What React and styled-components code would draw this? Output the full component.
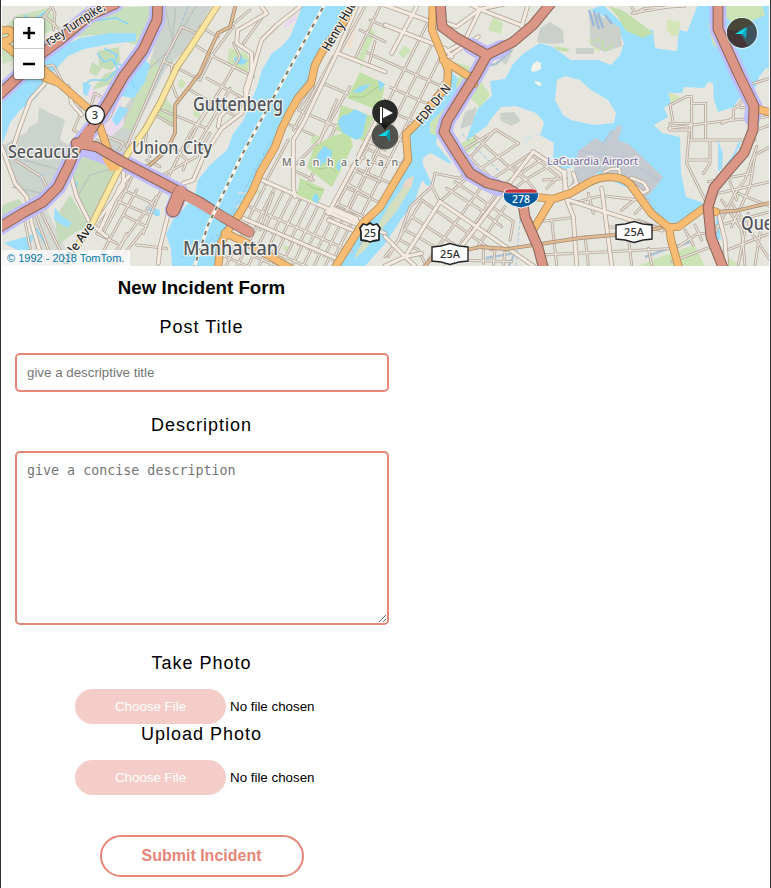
import React from "react";
import styled, { createGlobalStyle } from "styled-components";

const GlobalStyle = createGlobalStyle`
  * { box-sizing: border-box; }
  body { margin: 0; background: #fff; font-family: "Liberation Sans", Arial, sans-serif; color: #000; }
`;

const Page = styled.main`
  width: 771px;
  height: 888px;
  overflow: hidden;
  border: solid #333;
  border-width: 0 1px;
  padding: 6px 1px 0;
`;

const MapFrame = styled.section`
  position: relative;
  width: 767px;
  height: 260px;
  overflow: hidden;
  background: #e6e6df;
`;

const MapDrawing = styled.svg`
  display: block;
  width: 767px;
  height: 260px;
`;

const ROAD = {
  street: ["#b3a79b", 2.9, "#ebe5dd", 1.3],
  avenue: ["#b3a699", 4.7, "#f3ebe2", 3.1],
  tan: ["#a58b74", 3.8, "#dfba92", 2.3],
  yellow: ["#b7a16c", 6.8, "#fae69f", 5.2],
  orange: ["#b38a59", 8.2, "#f7bc72", 6.6],
  motorway: ["#8c695d", 10.8, "#dc9685", 8.6],
};

const RoadLine = styled.path`
  fill: none;
  vector-effect: non-scaling-stroke;
  stroke-linejoin: round;
  stroke-linecap: round;
  stroke: ${(p) => p.$color};
  stroke-width: ${(p) => p.$width};
`;

const Halo = styled(RoadLine).attrs({ $color: "#c1bcfb", $width: 16.5 })``;
const Water = styled.path`fill: #9cdffd;`;
const Land = styled.path`fill: #e6e6df;`;
const Park = styled.path`fill: ${(p) => p.$tone || "#cce4b5"};`;
const Pale = styled.path`fill: ${(p) => p.$tone || "#ccd2cc"};`;

const MapLabel = styled.text`
  font-family: "Noto Sans", "Open Sans", sans-serif;
  font-size: ${(p) => p.$size}px;
  font-weight: ${(p) => p.$weight || 500};
  fill: ${(p) => p.$color || "#50555a"};
  stroke: #f5f4f0;
  stroke-width: ${(p) => (p.$plain ? 0 : 2.6)}px;
  stroke-linejoin: round;
  paint-order: stroke;
`;

function Roads({ kind, paths }) {
  const [edge, outer, fill, inner] = ROAD[kind];
  return (
    <g>
      {paths.map((d, i) => <RoadLine key={"e" + i} d={d} $color={edge} $width={outer} />)}
      {paths.map((d, i) => <RoadLine key={"f" + i} d={d} $color={fill} $width={inner} />)}
    </g>
  );
}

/* Parallel streets: start point, direction vector, step vector, count */
const rows = (x, y, dx, dy, sx, sy, n) =>
  Array.from({ length: n }, (_, i) => `M${x + sx * i} ${y + sy * i}l${dx} ${dy}`);

const GRIDS = [
  {
    id: "east-side",
    area: "M372 6L431 6 430 30 443 58 442 88 404 130 404 162 380 200 366 216 330 212 352 160 370 130 392 82 364 68Z",
    lines: [...rows(316, 246, 120, -240, 12, 6, 8), ...rows(330, 36, 120, 54, -9, 20, 10)],
  },
  {
    id: "midtown",
    area: "M262 180L378 230 338 264 240 220Z",
    lines: [...rows(212, 250, 66, -132, 8.5, 4, 17), ...rows(250, 207, 130, 57, 0, 0, 1)],
  },
  {
    id: "downtown",
    area: "M224 238L250 222 342 262 338 268 222 268Z",
    lines: [...rows(221, 276, 30, -60, 9, 4, 13), ...rows(232, 234, 110, 48, -4, 11, 3)],
  },
];

/* Streets of the two halves, in units of a third of a pixel */
const WEST_STREETS = [
  "M380 440L490 185 545 80 600 105", "M490 185L515 195 600 240", "M575 130L650 175 760 230", "M600 80L655 110",
  "M515 190V250L530 290", "M620 235L740 300", "M570 270L700 345", "M485 330L620 385", "M465 345L525 378",
  "M440 400L435 430 450 470", "M560 440L600 365 660 270 720 170 700 130", "M530 480L570 400 620 330",
  "M600 240L640 160 700 80", "M590 440L690 265", "M370 570L460 610", "M355 605L450 645", "M370 645L440 680",
  "M430 700L470 600 530 480", "M310 700L380 565 410 500", "M290 790L410 570", "M320 790L470 590",
  "M350 790L430 690", "M410 735L500 745", "M480 500L440 480", "M380 700L340 790", "M290 700L350 730",
  "M460 540L590 470 630 400", "M520 440L560 480 550 510", "M785 55L730 130", "M750 30L690 80",
  "M1095 20L1020 155", "M1140 20L1065 175", "M1080 90L1155 125", "M1110 60L1155 80", "M1125 125L1105 200",
  "M970 250L1110 310", "M940 260L895 330 1010 380", "M1000 170L950 260 880 390", "M870 375L940 405",
  "M800 540L865 420", "M880 500L960 420 1010 300", "M900 600L1010 375", "M880 510L940 540", "M930 490L970 400 1050 260",
  "M1155 300L1110 430 990 650", "M1155 400L1030 650", "M1095 420L1155 450", "M1080 470L1155 500",
  "M1060 510L1140 545", "M1040 550L1110 590", "M1010 610L1090 650", "M820 580L780 690",
  "M120 65L155 20 165 40 160 90", "M120 65L135 50 180 90", "M70 110L120 65",
  "M130 200L160 195 190 250 240 300 240 345 220 390 285 430",
  "M275 310L285 280 345 315 330 350 300 380", "M300 400L370 430 350 460 290 420",
  "M150 580L125 530 45 480", "M105 640L160 790", "M70 640L100 790", "M125 640L200 790",
];

const WEST_AVENUES = [
  "M900 20L830 75 785 120 770 170 740 280 725 340 665 385 610 470 580 540 550 550 540 570",
  "M713 90L710 130 755 160 755 210 735 270 740 295 710 300 660 350 655 380",
  "M785 20L800 40 715 90", "M1070 20L1015 150 910 370 880 420 880 560 885 590",
  "M1015 160L1155 215", "M785 540L1155 700", "M730 655L1020 780",
  "M1155 310L1070 480 985 640", "M980 635L1085 680", "M1000 625L1070 655", "M985 660L1080 700",
  "M5 440L45 550 80 590 95 670 130 790", "M200 500L180 560 120 630", "M208 510L230 590 270 670 320 710",
  "M135 250L90 300 60 380 40 440", "M205 260L215 310 245 345",
  "M370 500V560L280 680", "M410 500L360 560 300 690", "M545 570L505 640 480 740 475 790",
];

const EAST_STREETS = [
  "M200 470L335 390 400 430", "M200 470L240 500", "M270 410L360 490 420 540", "M230 450L320 535",
  "M250 530L400 430", "M310 545L430 465", "M345 560L475 475", "M390 565L420 540 505 490", "M330 390L240 490",
  "M390 500L450 570", "M435 460L520 530 485 565", "M150 520L140 560 75 620 40 720 0 770", "M150 520L225 535 245 515",
  "M250 530L165 605", "M140 560L165 605", "M185 565L280 625 350 680", "M210 545L385 665 375 720",
  "M110 600L250 700 320 750", "M80 650L210 735", "M60 690L150 740", "M290 560L130 780", "M330 585L220 740",
  "M360 620L275 745", "M105 610L10 770", "M45 720L100 750 120 790", "M200 750L190 795", "M295 750V790", "M330 750L325 795", "M360 755L355 795",
  "M200 780L380 785", "M465 665L565 652", "M500 660L515 795", "M600 710L610 795", "M560 610L650 587 760 600",
  "M710 630L760 590", "M470 765L870 745", "M750 640L790 600", "M760 660L840 690", "M670 680L760 690",
  "M730 710L740 795", "M790 745L800 795", "M860 785L980 740", "M880 740L940 700 990 700", "M900 690L925 735", "M930 675L950 720",
  "M475 540L545 535", "M610 580L625 640", "M855 315L905 290 920 290 920 415", "M850 385L1000 365 1150 350",
  "M855 370V390H915", "M855 315L865 370H915", "M920 310H962V415", "M915 420H1110", "M915 370L905 490 960 600",
  "M975 420V490L955 520", "M910 480H975", "M1075 300L1045 330V355L1010 370", "M1055 320L1090 325",
  "M1070 300L1085 280", "M1000 580L1155 545", "M970 545L1100 520", "M1115 440L1080 540 1050 580 990 700",
  "M1155 440L1110 465 1095 560 1040 680", "M1010 600L1070 690 1080 795", "M1040 610L1155 780", "M1060 580L1155 620",
  "M990 680L1155 635", "M1000 760L1155 700", "M1090 640L1060 795", "M1130 670L1110 795", "M1035 545L1055 600",
  "M1105 250L1155 235", "M1115 390L1155 375", "M740 20L750 40 780 25 900 18", "M740 40L900 12",
];

const EAST_AVENUES = [
  "M0 75L180 145 200 170", "M0 15L165 75", "M95 20L20 160", "M185 70L215 80 285 28 420 80", "M285 28L240 120",
  "M250 10L285 28 390 5", "M430 10L410 80", "M185 155L230 130 300 160", "M190 170L280 110", "M150 80L190 90",
  "M445 455L275 680 185 798", "M445 455L535 515 545 575", "M165 605L275 680 445 798", "M165 605L60 770",
  "M0 710L60 770 90 798", "M0 798L60 770 110 760", "M545 600L565 650 575 795", "M650 565L660 640 680 795",
  "M550 600L830 690", "M540 515V570", "M565 520L575 550 555 565", "M1000 640L1020 720 1025 795",
];

const MOTORWAYS = [
  "M158 0L157 20 143 50 123 77 110 100 93 127 77 147 68 167 58 187 43 202 23 213 0 227",
  "M115 4L90 15 60 40 40 55 17 78 0 94",
  "M76 143L97 147 123 162 180 192 200 202 223 217 249 232",
  "M440 0L442 27 457 38 487 55 477 73 460 100 447 121 444 132 457 153 470 173 487 183 507 188 522 197 525 217 538 247 544 270",
  "M487 55L513 42 533 25 552 2",
  "M718 0L718 29 738 73 754 106 753 130 744 153 729 170 714 188 708 207 711 237 724 270",
];

const ORANGE = [
  "M0 32C14 24 17 40 5 41",
  "M2 43L20 57 43 69 67 90 90 110 100 127 108 150 114 165",
  "M45 78L56 82",
  "M356 -2L345 20 322 52 315 65 311 83 298 98 290 112 282 128 275 147 260 173 253 190 240 213 230 227 221 243 218 268",
  "M225 233L245 242 273 258 290 268",
  "M433 0L432 30 443 57 448 70 447 87 437 97 417 123 406 134 408 160 400 173 380 207 363 223 336 266",
  "M443 60L470 77 474 84",
  "M533 230L550 202M536 197L553 199 571 193 588 183C604 174 622 176 630 184L651 213 668 227 678 227 704 208 716 212",
  "M669 227L671 240 679 268",
  "M758 109L772 113",
];

const Shield = ({ d, x, y, children }) => (
  <g>
    <path d={d} fill="#fff" stroke="#252525" strokeWidth="1.4" />
    <MapLabel x={x} y={y} $size={11} $weight={500} $color="#303030" $plain textAnchor="middle">{children}</MapLabel>
  </g>
);

function CityMap() {
  return (
    <MapDrawing viewBox="2 6 767 260" role="img" aria-label="Map of Manhattan">
      <defs>
        {GRIDS.map((g) => <clipPath id={g.id} key={g.id}><path d={g.area} /></clipPath>)}
      </defs>

      {/* industrial ground and meadows west of the river */}
      <Pale d="M150 6H212L185 50 165 70 130 140 118 170 92 222 75 194 72 165 100 142 119 116 145 78 155 45Z" />
      <Pale d="M2 146L13 180 28 202 47 198 67 163 70 146 55 137 34 128Z" />
      <Pale d="M39 107L48 112 65 120 60 140 37 132 27 136 28 128 38 122Z" />
      <Pale d="M30 215L45 206 75 268H36Z" $tone="#d6d9d2" />
      <Park d="M64 28L105 8 154 6 151 32 136 45 108 36 90 35 63 40Z" $tone="#c8dfbd" />
      <Park d="M2 30L18 15 48 8 58 26 36 39 19 59 2 64Z" $tone="#cbe0bf" />
      <Park d="M98 51L119 47 120 62 111 70 99 67ZM92 62L102 68 96 76 89 72ZM105 74L117 70 122 76 108 85 92 90 100 80Z" $tone="#c4ddb6" />
      <Park d="M83 149L100 153 116 171 98 202 88 222 72 181Z" $tone="#c6dbbc" />
      <Park d="M2 205L19 199 31 215 2 228ZM55 218L70 195 86 221 90 226 74 233 58 245Z" $tone="#c6dbbc" />
      <Park d="M122 128L132 107 145 71 155 57 160 72 145 104 132 130ZM165 97L175 110 172 128 155 115Z" $tone="#c9deb9" />
      <Pale d="M122 100L124 125 110 138 102 126 113 105Z" $tone="#eadced" />
      <Pale d="M92 85L95 95 102 92 98 103 87 96Z" $tone="#eadced" />
      <path d="M165 6L174 46 142 75M176 6L172 42M196 6L170 50M77 197L90 175 115 168M6 155L61 170 65 190M12 187L50 195" stroke="#bbc5c0" strokeWidth="1.4" fill="none" />

      {/* rivers and bays */}
      <Water d="M136 33L110 33 80 38 60 47 42 63 20 83 2 96V145L10 123 19 111 37 97 44 80 57 68 68 56 84 49 110 44 136 41Z" />
      <Water d="M139 52L150 65 145 82 134 98 120 96 128 72ZM83 82L91 85 87 96 83 94ZM119 106L129 109 117 126 112 120Z" />
      <Water d="M302 6L297 20 290 37 281 47 272 53 262 70 257 87 250 104 243 121 233 134 227 150 210 165 198 180 195 195 180 213 173 220 166 234 171 249 172 266H218L222 243 240 214 254 190 262 172 285 130 299 98 312 83 317 65 331 43 353 6Z" />
      <Water d="M433 27L447 55 454 75 462 82 450 110 438 126 436 144 451 162 440 171 442 174 435 176 434 183 427 186 422 180 415 200 400 221 384 245 365 266H338L380 207 403 172 407 134 446 86 442 62Z" />
      <Water d="M423 163Q422 156 431 153L437 155 451 163 440 171 442 174 435 176 434 184 425 181Z" />
      <Land d="M423 165Q421 156 431 153L438 157 450 164 441 171 444 175 435 176 432 184Z" />
      <Water d="M524 53L540 43 553 47 571 60 598 60 611 65 620 55 624 43 617 28 608 18 590 10 600 6H769V78L757 86 744 95 738 100 734 107 718 112 714 100 713 83 708 82 704 88 684 87 682 93 669 93 671 103 664 108 668 117 654 125 662 133 680 137 681 173 686 197 704 203 690 214 676 225 654 213 643 195 578 165 566 169 560 168 553 158 554 143 540 135 527 137 525 146 526 138 541 134 544 122 536 113 516 106 501 107 490 120 487 126 466 141 474 117 479 107 492 96 490 81 505 79 513 64Z" />
      <Water d="M717 208L721 240 715 239ZM718 141L723 153 722 169 718 171Z" />
      <path d="M740 142L734 155 726 166 728 171M737 145L742 151" stroke="#9cdffd" strokeWidth="1.8" fill="none" />
      <Water d="M151 207L160 210 160 216 150 212ZM55 207L60 215 72 223 68 228 54 220ZM4 243L35 234 28 251 17 250ZM38 173L44 175 41 181Z" />

      {/* islands */}
      <Land d="M557 80L565 76 580 80 591 90 608 100 616 113 614 123 594 125 571 120 563 115 555 100Z" />
      <Land d="M600 2L625 26 641 30 653 30 655 48 667 50 677 51 679 30 687 32 699 2Z" />
      <path d="M533 64l4-3 4 2 0 6-4 2-5 1-1-3zM535 81l5 1 2 3-3 1-4-3z" fill="#eff3e8" />
      <path d="M770 69L766 68 759 77 756 86 770 86Z" fill="#e6e6df" />
      <path d="M414 176L408 178 403 187 390 204 378 225 358 249 354 259 364 251 381 230 396 212 412 186Z" fill="#d4dec0" />
      <path d="M414 176L405 181 402 188 411 187Z" fill="#ead5c7" />

      {/* parks and large lots */}
      <path d="M351 28l6-3-6 23-7-2z" fill="#f0e1d2" />
      <Park d="M371 28L375 33 361 68 357 60ZM314 134L323 138 317 146 310 142ZM229 48L246 53 250 60 247 75 227 65Z" />
      <path d="M234 58l8-3 1 4 5 1-5 5-8-2z" fill="#91dafb" />
      <Park d="M405 45L411 51 403 58 398 53ZM493 17L503 23 501 34 488 30ZM180 79L186 82 183 88 178 86ZM193 110L200 113 199 118 194 116Z" />
      <Park d="M453 62L469 66 475 82 460 100 456 85 460 75ZM481 81L490 95 480 107 469 97ZM448 105L430 123 430 133 438 136 450 133 444 122ZM458 145L474 136 480 142 467 153Z" />
      <Park d="M554 46L570 49 567 52 557 50ZM608 6L622 10 643 25 653 33 643 38 626 31 618 17Z" $tone="#c2deab" />
      <Park d="M667 20L680 22 679 35 672 36 667 30ZM668 92L681 97 671 103ZM594 28L609 30 612 44 598 52 588 42Z" $tone="#d4e5b6" />
      <Park d="M708 22L714 30 719 48 713 45ZM727 6L762 6 765 15 738 27 723 15ZM639 266L657 258 694 245 705 266ZM720 250L740 266H718ZM737 190L742 193 738 200Z" />
      <Park d="M283 245L292 248 289 251 284 250ZM258 189L262 192 260 196 257 193Z" />
      <Pale d="M285 24L295 14 297 20 285 28Z" $tone="#ead9ed" />
      <Pale d="M540 28L550 22 563 30 564 43 550 44 537 42ZM589 12L605 18 620 28 622 46 605 52 591 45Z" $tone="#cbd0cb" />
      <Pale d="M576 48H594V54L576 54ZM500 113L514 112 521 121 511 126 501 121ZM465 112L477 107 472 125 460 129ZM503 52L514 48 506 65 500 60Z" $tone="#cbd0cb" />
      <path d="M589 10l5 16M594 11l5 18M598 13l5 15M605 15l7 9" stroke="#9bb9d7" strokeWidth="2.4" />
      <path d="M593 42Q600 38 603 41V48Q607 53 613 43" fill="none" stroke="#c3deae" strokeWidth="2" />
      <Pale d="M571 186L578 151 596 138 605 144 618 125 622 127 618 140 630 145 663 177 654 189 646 198 628 187 620 176 600 171 584 181Z" $tone="#c5cad1" />
      <path d="M601 146l12-16M580 151l45 7 35 23M609 158l-17 18" stroke="#bcc5d1" strokeWidth="2.2" fill="none" />
      <path d="M241 200h12M238 193h13M234 207h13M237 205h13" stroke="#dce4e5" strokeWidth="1.5" />
      <path d="M61 30L73 24 82 30 93 21 116 18 128 24M104 48L117 55 114 63 122 65M97 53L104 62 112 59 118 69 107 80 91 80 84 85M12 222L30 207M36 228L52 255 53 266M77 181L75 195M146 207L158 216M137 54L145 60 131 78 134 88M45 12L31 23 25 15" fill="none" stroke="#8bd5f7" strokeWidth="1.7" />
      <path d="M188 6L175 42 133 130M270 142L220 236M348 20L300 90M180 258L230 228M462 134L502 174M521 208L516 266" stroke="#90bfd8" strokeWidth="1.4" strokeDasharray="4 2" opacity=".55" fill="none" />
      <path d="M645 257L667 249 690 242M486 258L515 253 509 266M478 68l18-4 16-14" stroke="#abc3d1" strokeWidth="2.4" fill="none" />

      {/* streets */}
      {GRIDS.map((g) => (
        <g key={g.id} clipPath={`url(#${g.id})`}><Roads kind="street" paths={g.lines} /></g>
      ))}
      <g transform="scale(.33333)"><Roads kind="street" paths={WEST_STREETS} /></g>
      <g transform="translate(385 0) scale(.33333)"><Roads kind="street" paths={EAST_STREETS} /></g>
      <g transform="scale(.33333)"><Roads kind="avenue" paths={WEST_AVENUES} /></g>
      <g transform="translate(385 0) scale(.33333)"><Roads kind="avenue" paths={EAST_AVENUES} /></g>
      <RoadLine d="M628 180L643 193 648 190 644 183 632 178Z" $color="#b3a699" $width={4.4} />
      <RoadLine d="M628 180L643 193 648 190 644 183 632 178Z" $color="#f3ebe2" $width={2.8} />
      <RoadLine d="M604 172L611 169 619 169 620 174" $color="#b3a699" $width={4} />
      <RoadLine d="M604 172L611 169 619 169 620 174" $color="#f3ebe2" $width={2.4} />

      {/* park surfaces cover the regular blocks */}
      <Park d="M360 72L385 84 380 111 347 98ZM341 105L374 117 363 141 336 130ZM330 137L349 131 353 146 332 187 307 168 314 147ZM300 178L325 189 318 204 297 195Z" $tone="#c1dfa6" />
      <path d="M341 116l8-2 6-5 12 6-5 22-6 3-14-8-4-9zM318 154l6-8 8 5-1 11-8 1-3 4-5-5zM338 161l4 2-3 8-3-3zM352 93l8-7 11-2-9 8zM378 80l7 4-5 7zM315 193l4 4-1 7-6-4z" fill="#91dafb" />
      <path d="M349 97l14 0 16-11M311 166l10 3 9-2 6 5M307 184l8 5 8 1" fill="none" stroke="#abc98e" strokeWidth="1" />

      <Roads kind="tan" paths={[
        "M237 0L230 27 218 33 210 50 200 73 187 90 175 105 175 133 167 150 150 165 143 167",
        "M423 268L433 257 480 247 507 249 580 238 614 235 660 228",
        "M714 212L735 211 769 203",
      ]} />
      {[MOTORWAYS[0], MOTORWAYS[1], "M83 148L123 162 180 192 173 210", "M471 46L487 55 477 73 460 100 447 121 444 132 457 153 470 173 487 183 498 188M487 55L502 48", "M718 4L718 29 738 73 754 106 752 118"].map((d, i) => <Halo key={i} d={d} />)}
      <Roads kind="yellow" paths={["M221 0L190 48 177 67 160 103 145 130 128 153 117 173 93 222 81 240 65 266"]} />
      <Roads kind="orange" paths={ORANGE} />
      <path d="M103 146L121 158 119 170 110 171 103 160Z" fill="#f7bc72" />
      <Roads kind="motorway" paths={MOTORWAYS} />
      <RoadLine d="M180 193L173 210" $color="#8c695d" $width={14.5} />
      <RoadLine d="M180 192L173 210" $color="#dc9685" $width={12.5} />
      <RoadLine d="M180 192L249 232" $color="#dc9685" $width={9.5} />
      <path d="M86 126L96 128 92 143 99 148 83 149 71 152 76 142Z" fill="#dc9685" />
      <path d="M327 0L243 153 208 225 194 268" fill="none" stroke="#f8f5e9" strokeWidth="3.4" />
      <path d="M327 0L243 153 208 225 194 268" fill="none" stroke="#777969" strokeWidth="2" strokeDasharray="4 5" />

      {/* place and road names */}
      <MapLabel x="193" y="111" $size={19} textLength="90" lengthAdjust="spacingAndGlyphs">Guttenberg</MapLabel>
      <MapLabel x="132" y="154" $size={18} textLength="80" lengthAdjust="spacingAndGlyphs">Union City</MapLabel>
      <MapLabel x="8" y="158" $size={18} textLength="71" lengthAdjust="spacingAndGlyphs">Secaucus</MapLabel>
      <MapLabel x="183" y="255" $size={20} textLength="95" lengthAdjust="spacingAndGlyphs">Manhattan</MapLabel>
      <MapLabel x="741" y="230" $size={20} textLength="32" lengthAdjust="spacingAndGlyphs">Que</MapLabel>
      <MapLabel x="282" y="165.5" $size={10.5} $color="#73746f" textLength="116">Manhattan</MapLabel>
      <MapLabel x="547" y="164.5" $size={11.5} $color="#8078a7" textLength="91" lengthAdjust="spacingAndGlyphs">LaGuardia Airport</MapLabel>
      <MapLabel $size={13} $color="#292929" transform="translate(49 46) rotate(-33)" textLength="68" lengthAdjust="spacingAndGlyphs">rsey Turnpike,</MapLabel>
      <MapLabel $size={13} $color="#292929" transform="translate(329 52) rotate(-60)" textLength="56" lengthAdjust="spacingAndGlyphs">Henry Hud</MapLabel>
      <MapLabel $size={12.5} $color="#292929" transform="translate(422 125) rotate(-51)" textLength="47" lengthAdjust="spacingAndGlyphs">FDR Dr N</MapLabel>
      <MapLabel $size={13} $color="#292929" transform="translate(66 266) rotate(-54)" textLength="49" lengthAdjust="spacingAndGlyphs">dale Ave</MapLabel>

      {/* route shields */}
      <circle cx="95" cy="115" r="9.5" fill="#fff" stroke="#292929" strokeWidth="1.4" />
      <MapLabel x="95" y="119" $size={11} $color="#303030" $plain textAnchor="middle">3</MapLabel>
      <path d="M363 224L367 225 370 223 373 225 377 224 380 228 379 232 379 240 373 241 370 242 367 241 361 240 361 232 360 228Z" fill="#fff" stroke="#222" strokeWidth="1.8" strokeLinejoin="round" />
      <MapLabel x="370" y="236.5" $size={11.5} $color="#303030" $plain textAnchor="middle" textLength="12" lengthAdjust="spacingAndGlyphs">25</MapLabel>
      <Shield x="450" y="258" d="M432 247L441 246 450 243.5 459 246 468 247V261L459 262 450 264.5 441 262 432 261Z">25A</Shield>
      <Shield x="634" y="236" d="M616 225L625 224 634 221.5 643 224 652 225V239L643 240 634 242.5 625 240 616 239Z">25A</Shield>
      <path d="M505 190H537Q541 197 535 202Q529 207 521 208Q512 207 506 202Q501 197 505 190Z" fill="#065a9e" stroke="#fff" strokeWidth="1" />
      <path d="M505 193V190L509 189H533L537 190V193Z" fill="#c6313d" stroke="#fff" strokeWidth=".5" />
      <MapLabel x="521" y="202.5" $size={11.5} $color="#fff" $plain textAnchor="middle" textLength="18" lengthAdjust="spacingAndGlyphs">278</MapLabel>

      {/* current position and incident markers */}
      <circle cx="385" cy="136" r="13.3" fill="#383936" opacity=".85" />
      <path d="M378 136L390 129 387 136Z" fill="#11d9e9" />
      <path d="M390 129L390 142 386 136Z" fill="#0795aa" />
      <path d="M379 122H391L385 130Z" fill="#151515" />
      <circle cx="385" cy="112.5" r="12.8" fill="#20211f" opacity=".95" />
      <path d="M381 107V123" stroke="#fff" strokeWidth="2" />
      <path d="M383 107.5L393 113 383 118Z" fill="#fff" />
      <circle cx="742" cy="33" r="16" fill="#fff" opacity=".6" />
      <circle cx="742" cy="33" r="15" fill="#3f535f" />
      <path d="M735 20Q729 24 727 31Q727 39 733 44Q740 50 748 46L739 33Z" fill="#443536" />
      <path d="M727 30Q730 20 740 18Q749 18 753 24L735 31Z" fill="#474837" />
      <path d="M735 34L747 27 743 34Z" fill="#12dceb" />
      <path d="M747 27L746 39 742 34Z" fill="#0caabd" />
    </MapDrawing>
  );
}

const ZoomControl = styled.div`
  position: absolute;
  left: 12px;
  top: 12px;
  width: 30px;
  border-radius: 3px;
  overflow: hidden;
  box-shadow: 0 0 0 1px rgba(70, 70, 70, .35), 0 1px 4px rgba(0, 0, 0, .3);
`;

const ZoomButton = styled.button`
  display: grid;
  place-items: center;
  width: 30px;
  height: ${(p) => (p.$last ? 30 : 31)}px;
  padding: 0;
  border: 0;
  border-bottom: ${(p) => (p.$last ? "0" : "1px solid #ccc")};
  background: #fff;
`;

const Attribution = styled.div`
  position: absolute;
  left: 0;
  bottom: 0;
  width: 128px;
  height: 16px;
  padding-left: 5px;
  background: rgba(255, 255, 255, .72);
  color: #0078a8;
  font: 11px/16px "Liberation Sans", Arial, sans-serif;
  white-space: nowrap;
`;

const Form = styled.form`
  display: flex;
  flex-direction: column;
  align-items: center;
  width: 374px;
  margin-left: 13px;
  padding-top: 11px;
`;

const FormTitle = styled.h3`
  margin: 0 1px 0 0;
  font-size: 18.72px;
  line-height: 21px;
`;

const Label = styled.label`
  margin: ${(p) => p.$gap}px 1px 0 0;
  font-size: 18px;
  line-height: 20px;
  letter-spacing: 1px;
`;

const TextInput = styled.input`
  width: 374px;
  height: 39px;
  margin: 16px 0 0;
  padding: 10px;
  border: 2px solid #e58677;
  border-radius: 5px;
  font: 13.333px "Liberation Sans", Arial, sans-serif;
  outline: 0;
  &::placeholder { color: #757575; }
`;

const TextArea = styled.textarea`
  display: block;
  width: 374px;
  height: 174px;
  margin: 16px 0 0;
  padding: 10px;
  border: 2px solid #e58677;
  border-radius: 5px;
  font: 13.333px "DejaVu Sans Mono", monospace;
  outline: 0;
  &::placeholder { color: #757575; }
`;

const FileInput = styled.input`
  width: 254px;
  height: 35px;
  margin: 16px 0 0;
  font: 13.333px "Liberation Sans", Arial, sans-serif;
  &::file-selector-button {
    width: 151px;
    height: 35px;
    margin: 0 4px 0 0;
    padding: 0;
    border: 0;
    border-radius: 18px;
    background: #f5cdc8;
    color: #fff;
    font: inherit;
  }
`;

const SubmitButton = styled.button`
  width: 204px;
  height: 42px;
  margin-top: 40px;
  padding: 0 1px 0 0;
  border: 2px solid #e58677;
  border-radius: 21px;
  background: #fff;
  color: #e58677;
  font: bold 16px "Liberation Sans", Arial, sans-serif;
`;

export default function App() {
  return (
    <>
      <GlobalStyle />
      <Page>
        <MapFrame>
          <CityMap />
          <ZoomControl>
            <ZoomButton aria-label="Zoom in">
              <svg width="12" height="12"><path d="M0 6H12M6 0V12" stroke="#000" strokeWidth="2.6" /></svg>
            </ZoomButton>
            <ZoomButton aria-label="Zoom out" $last>
              <svg width="12" height="12"><path d="M0 6H12" stroke="#000" strokeWidth="2.6" /></svg>
            </ZoomButton>
          </ZoomControl>
          <Attribution>© 1992 - 2018 TomTom.</Attribution>
        </MapFrame>
        <Form>
          <FormTitle>New Incident Form</FormTitle>
          <Label $gap={19} htmlFor="title">Post Title</Label>
          <TextInput id="title" placeholder="give a descriptive title" />
          <Label $gap={23} htmlFor="description">Description</Label>
          <TextArea id="description" placeholder="give a concise description" />
          <Label $gap={28} htmlFor="camera">Take Photo</Label>
          <FileInput id="camera" type="file" />
          <Label $gap={0} htmlFor="upload">Upload Photo</Label>
          <FileInput id="upload" type="file" />
          <SubmitButton type="button">Submit Incident</SubmitButton>
        </Form>
      </Page>
    </>
  );
}
